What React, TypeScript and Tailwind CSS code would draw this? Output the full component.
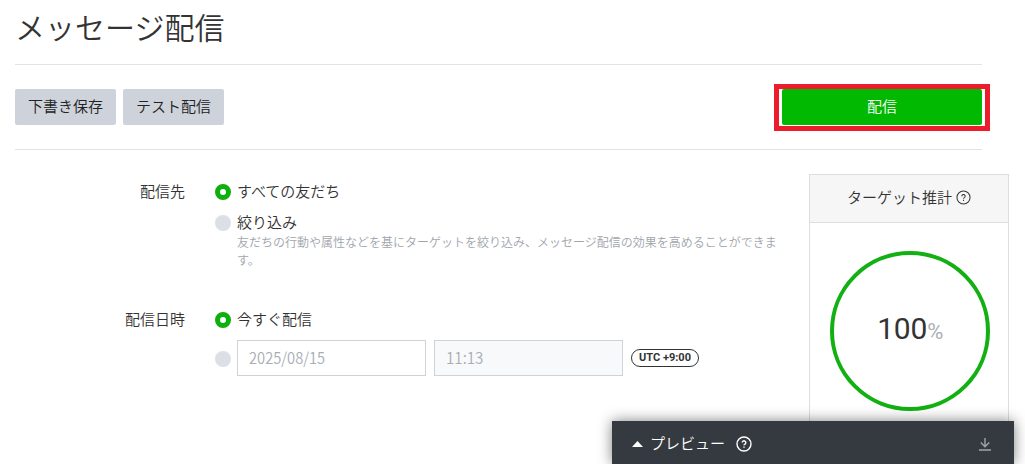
import React from 'react';

const Radio = ({ checked = false }: { checked?: boolean }) => (
    <span
        role="radio"
        aria-checked={checked}
        className={`mt-px block size-4 shrink-0 rounded-full ${checked ? 'border-[5px] border-[#0db00d] bg-white' : 'bg-[#dddfe7]'}`}
    />
);

const HelpIcon = ({ className, strokeWidth }: { className: string; strokeWidth: number }) => (
    <svg className={className} viewBox="0 0 16 16" fill="none" stroke="currentColor" strokeWidth={strokeWidth}>
        <circle cx="8" cy="8" r="7" />
        <path d="M6.2 6.6a1.8 1.8 0 1 1 2.8 1.5c-.7.4-1 .6-1 1.2" />
        <path d="M8 10.4v1.3" />
    </svg>
);

const Toolbar = () => (
    <div className="flex h-[85px] items-start gap-[7px] border-b border-[#e3e3e3] pt-6">
        <button className="h-9 w-[101px] rounded-[2px] bg-[#ced3db] text-[15px] leading-[34px] text-[#222]">
            <span className="block h-9">下書き保存</span>
        </button>
        <button className="h-9 w-[101px] rounded-[2px] bg-[#ced3db] text-[15px] leading-[34px] text-[#222]">
            <span className="block h-9">テスト配信</span>
        </button>
        {/* Highlight frame around the send button */}
        <div className="-mt-[5px] -mr-[8px] ml-auto h-[47px] w-[216px] border-[5px] border-[#ec1c2b] pl-[3px]">
            <button className="block h-9 w-[200px] rounded-[2px] bg-[#00b900] text-[15px] leading-[34px] text-white">
                <span className="block h-9">配信</span>
            </button>
        </div>
    </div>
);

const TargetCard = () => (
    <aside className="h-[300px] w-[200px] border border-[#dedede] bg-white">
        <div className="flex h-12 items-center justify-center gap-1 border-b border-[#dedede] bg-[#f6f6f6] text-[15px] text-[#333]">
            <span className="-mt-0.5">ターゲット推計</span>
            <HelpIcon className="-mt-0.5 size-[15px]" strokeWidth={1.1} />
        </div>
        <div className="mt-7 ml-5 flex size-40 items-center justify-center rounded-full border-4 border-[#12b012] font-['Roboto',sans-serif] font-normal">
            <span className="-mt-0.5 flex items-baseline text-[#333]">
                <span className="text-[30px] leading-10 tracking-[-0.2px]">100</span>
                <span className="text-[22px] leading-10 tracking-[-0.5px] text-[#a9b0b5]">%</span>
            </span>
        </div>
    </aside>
);

const PreviewBar = () => (
    <div className="absolute top-[421px] left-[612px] flex h-[43px] w-[402px] items-center bg-[#353a40] pr-[21px] pl-5 text-white shadow-[0_0_14px_rgba(0,0,0,0.5)]">
        <svg className="mt-[3px] h-[6px] w-[11px]" viewBox="0 0 11 6" fill="currentColor">
            <path d="M5.5 0 11 6H0z" />
        </svg>
        <span className="ml-[7px] text-[15px] leading-6">プレビュー</span>
        <HelpIcon className="mt-[3px] ml-[11px] size-4" strokeWidth={1.4} />
        <svg className="mt-0.5 ml-auto size-4" viewBox="0 0 16 16" fill="none" stroke="#a2a4a8" strokeWidth="1.4">
            <path d="M8 2v8.5M3.8 6.5 8 10.7l4.2-4.2M2 14h12" />
        </svg>
    </div>
);

const App = () => {
    return (
        <div className="relative h-[464px] w-[1025px] overflow-hidden bg-white pl-[15px] font-['Noto_Sans_CJK_JP',sans-serif] font-[350] text-[#333]">
            <div className="w-[967px]">
                <h1 className="h-[65px] border-b border-[#e3e3e3] pt-[5px] text-[30px] leading-[42px] font-[350]">メッセージ配信</h1>
                <Toolbar />
                <div className="flex pt-6">
                    <div className="w-[821px] shrink-0 text-[15px] leading-6">
                        <div className="flex h-[128px] gap-[30px] pt-[5px]">
                            <div className="w-[170px] text-right">配信先</div>
                            <div>
                                <label className="flex items-center gap-[6px]">
                                    <Radio checked />
                                    <span>すべての友だち</span>
                                </label>
                                <label className="mt-[7px] flex items-center gap-[6px]">
                                    <Radio />
                                    <span>絞り込み</span>
                                </label>
                                <p className="-mt-px ml-[22px] w-[545px] text-[12px] leading-[18px] text-[#a0a5ab]">
                                    友だちの行動や属性などを基にターゲットを絞り込み、メッセージ配信の効果を高めることができます。
                                </p>
                            </div>
                        </div>
                        <div className="flex gap-[30px] pt-[5px]">
                            <div className="w-[170px] text-right">配信日時</div>
                            <div>
                                <label className="flex items-center gap-[6px]">
                                    <Radio checked />
                                    <span>今すぐ配信</span>
                                </label>
                                <div className="mt-[9px] flex items-center text-[16px] text-[#a9adb3]">
                                    <Radio />
                                    <div className="ml-[6px] flex h-9 w-[189px] items-center border border-[#d0d2d8] bg-white pb-0.5 pl-[11px]">
                                        <span className="origin-left scale-x-[0.92]">2025/08/15</span>
                                    </div>
                                    <div className="ml-2 flex h-9 w-[189px] items-center border border-[#d0d2d8] bg-[#f7f9fb] pb-0.5 pl-[11px]">
                                        <span className="origin-left scale-x-[0.95]">11:13</span>
                                    </div>
                                    <span className="ml-2 flex h-[18px] w-[68px] items-center justify-center rounded-full border border-[#333] font-['Roboto',sans-serif] text-[11px] font-bold text-[#333]">
                                        UTC +9:00
                                    </span>
                                </div>
                            </div>
                        </div>
                    </div>
                    <div className="-ml-[27px]">
                        <TargetCard />
                    </div>
                </div>
            </div>
            <PreviewBar />
        </div>
    );
};

export default App;
